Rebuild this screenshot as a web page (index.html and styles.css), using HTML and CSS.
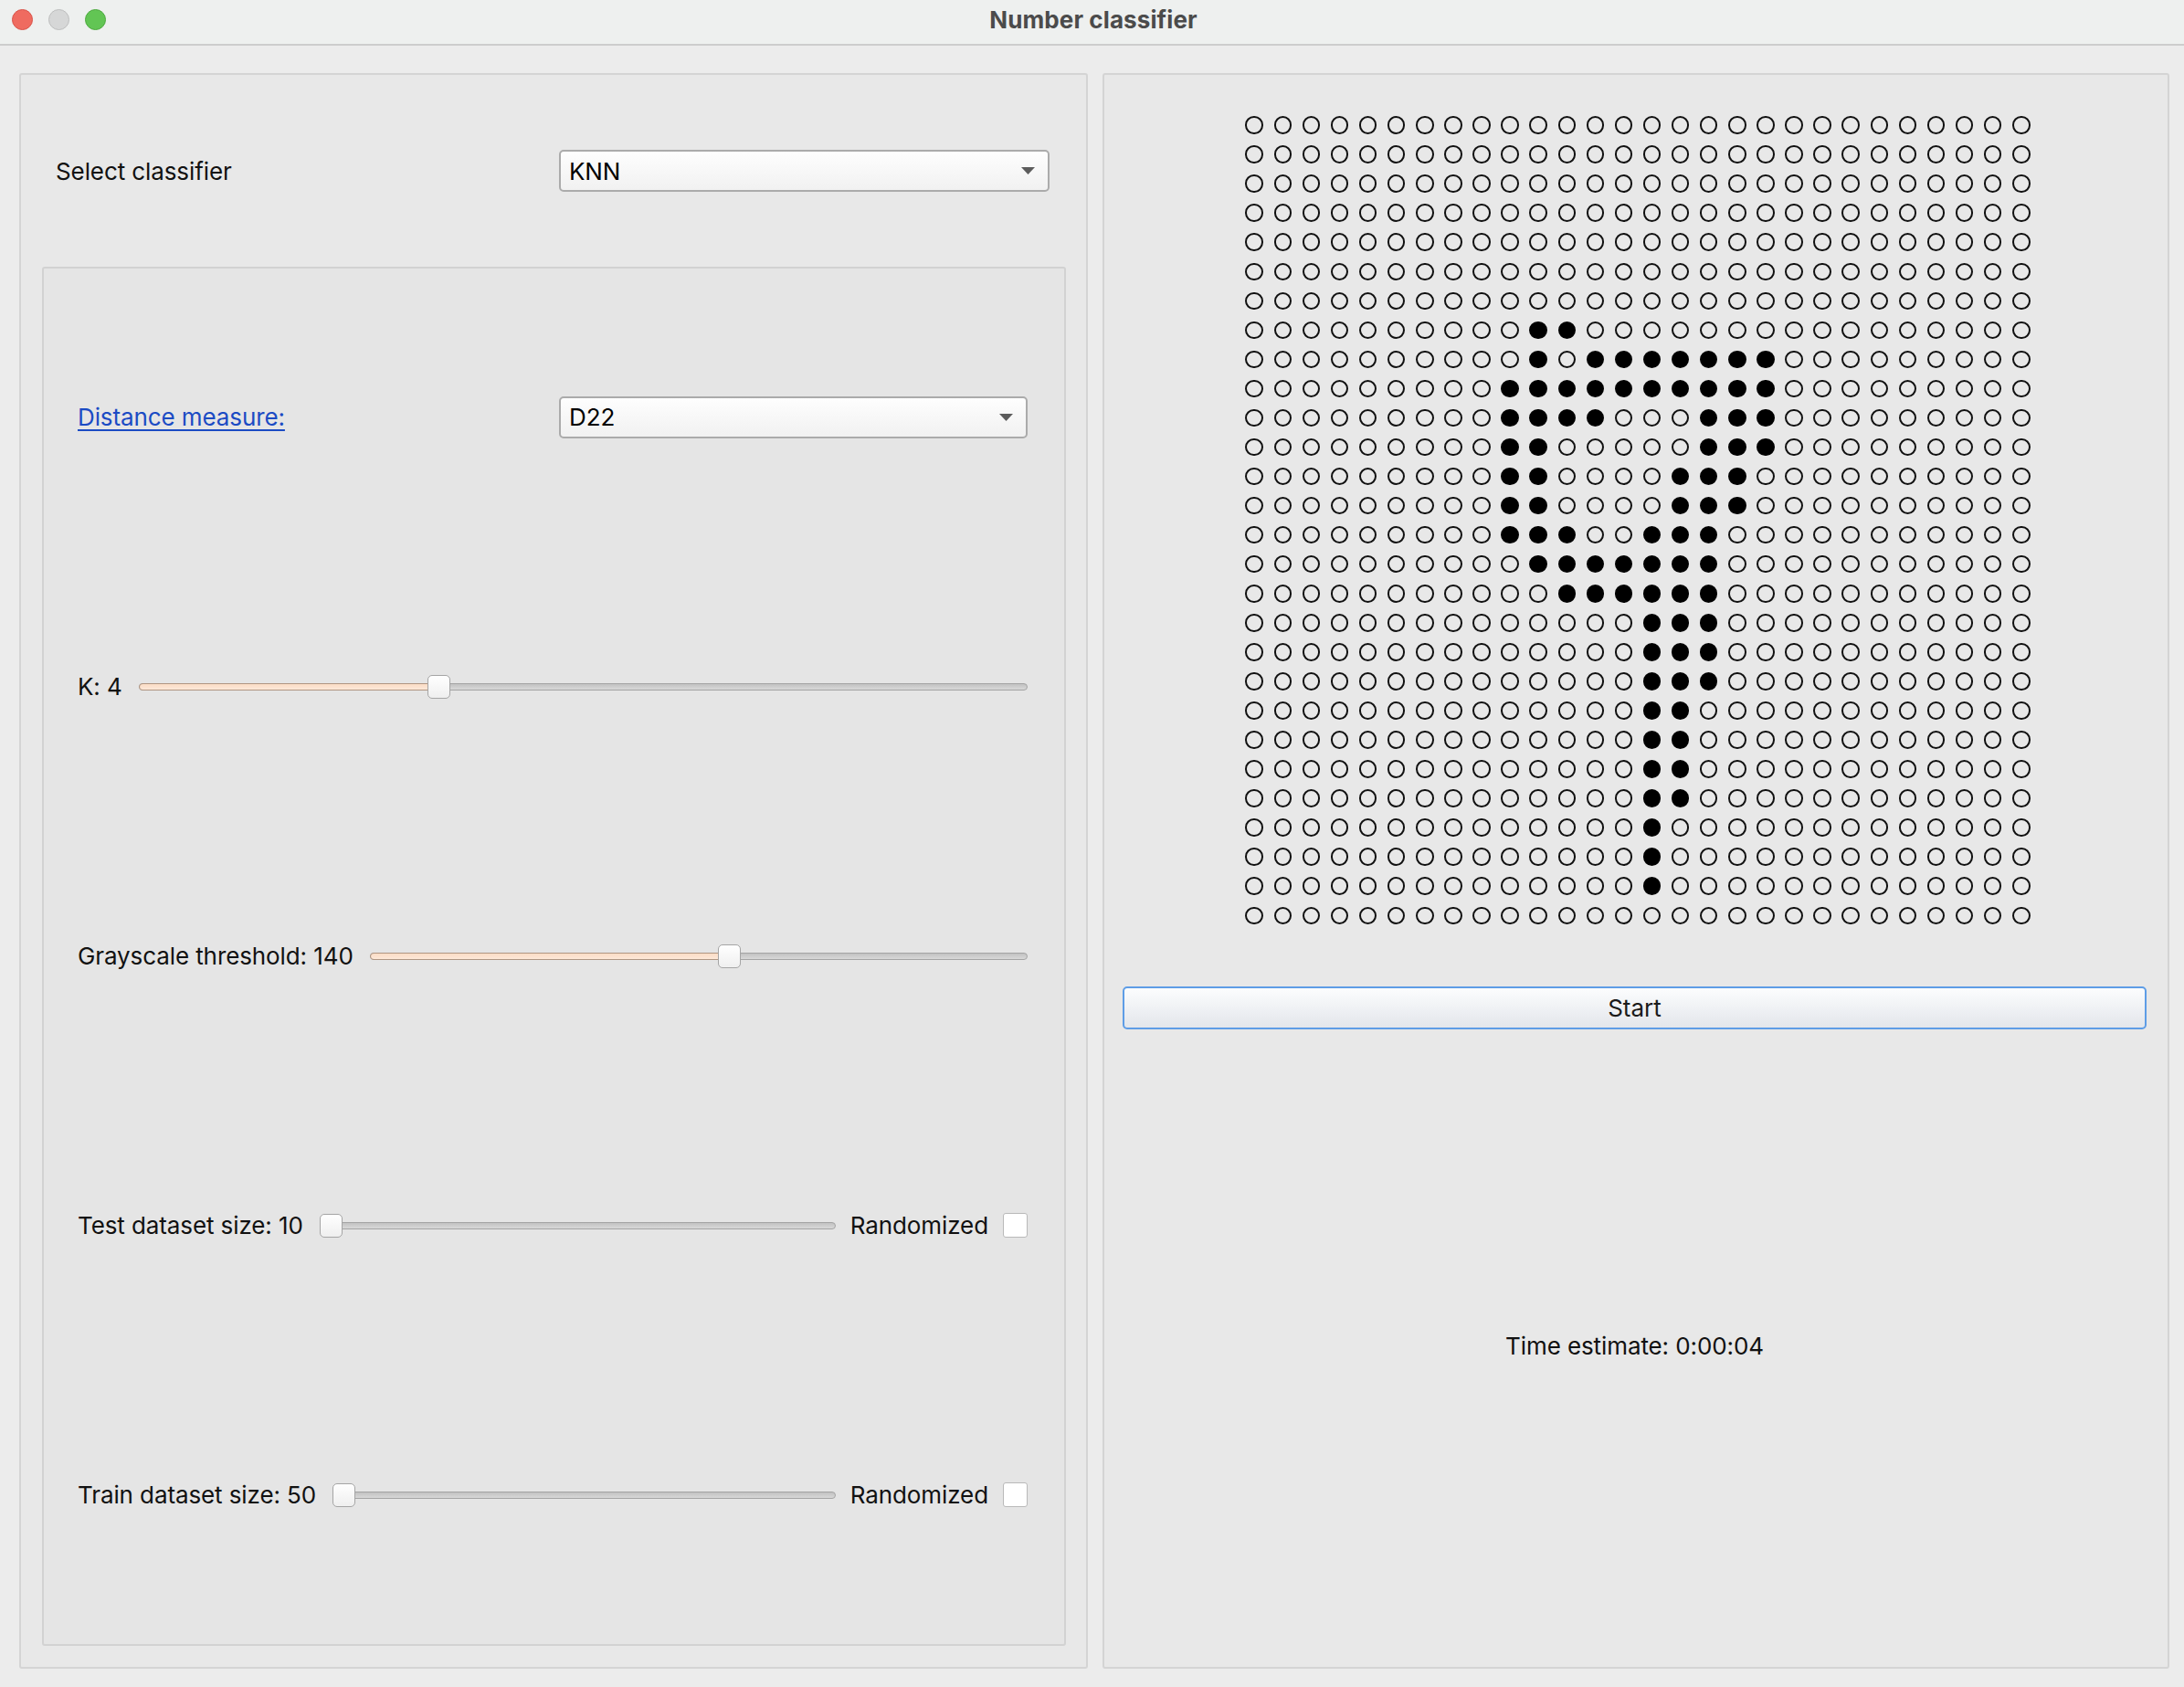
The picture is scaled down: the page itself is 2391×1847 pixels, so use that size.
FILE: index.html
```html
<!DOCTYPE html>
<html lang="en">
<head>
<meta charset="utf-8">
<title>Number classifier</title>
<link rel="stylesheet" href="styles.css">
</head>
<body>
<div class="window">
  <div class="titlebar">
    <div class="lights">
      <span class="light red"></span>
      <span class="light gray"></span>
      <span class="light green"></span>
    </div>
    <div class="title">Number classifier</div>
    <div></div>
  </div>
  <div class="content">
    <section class="panel left">
      <div class="header-row">
        <span class="label">Select classifier</span>
        <div class="combo combo-wide">
          <span>KNN</span>
          <svg class="arrow" width="15" height="8" viewBox="0 0 15 8"><path d="M0 0H15L7.5 8Z" fill="#5c5c5c"/></svg>
        </div>
      </div>
      <div class="group">
        <div class="row">
          <a class="link" href="#">Distance measure:</a>
          <div class="combo combo-narrow">
            <span>D22</span>
            <svg class="arrow" width="15" height="8" viewBox="0 0 15 8"><path d="M0 0H15L7.5 8Z" fill="#5c5c5c"/></svg>
          </div>
        </div>
        <div class="row">
          <span class="label">K: 4</span>
          <div class="slider" style="--v: 0.3333">
            <div class="groove"></div>
            <div class="fill"></div>
            <div class="handle"></div>
          </div>
        </div>
        <div class="row">
          <span class="label">Grayscale threshold: 140</span>
          <div class="slider" style="--v: 0.549">
            <div class="groove"></div>
            <div class="fill"></div>
            <div class="handle"></div>
          </div>
        </div>
        <div class="row">
          <span class="label">Test dataset size: 10</span>
          <div class="slider" style="--v: 0">
            <div class="groove"></div>
            <div class="handle"></div>
          </div>
          <span class="label check-label">Randomized</span>
          <span class="checkbox"></span>
        </div>
        <div class="row">
          <span class="label">Train dataset size: 50</span>
          <div class="slider" style="--v: 0">
            <div class="groove"></div>
            <div class="handle"></div>
          </div>
          <span class="label check-label">Randomized</span>
          <span class="checkbox"></span>
        </div>
      </div>
    </section>
    <section class="panel right">
      <div class="grid" id="grid"></div>
      <button class="start" type="button">Start</button>
      <div class="status">Time estimate: 0:00:04</div>
    </section>
  </div>
</div>
<script src="script.js"></script>
</body>
</html>
```

FILE: styles.css
```css
* { box-sizing: border-box; }
html, body { margin: 0; padding: 0; }
body {
  width: 2391px;
  height: 1847px;
  overflow: hidden;
  background: #ececec;
  font-family: Inter, "Noto Sans", "Liberation Sans", sans-serif;
  font-size: 26px;
  letter-spacing: -0.1px;
  color: #111;
}
.window { display: flex; flex-direction: column; height: 1847px; }

.titlebar {
  flex: none;
  height: 50px;
  padding-bottom: 6px;
  background: #eef0ef;
  border-bottom: 2px solid #cdcdcd;
  display: grid;
  grid-template-columns: 1fr auto 1fr;
  align-items: center;
}
.lights { display: flex; gap: 17px; padding-left: 13px; }
.light { width: 23px; height: 23px; border-radius: 50%; }
.red { background: #ef6b60; border: 1px solid #d9554b; }
.gray { background: #d6d7d7; border: 1px solid #bdbebe; }
.green { background: #62c554; border: 1px solid #4eaa40; }
.title { font-weight: 700; color: #4b4b4b; font-size: 26px; letter-spacing: 0.1px; padding-left: 3px; }

.content {
  flex: 1;
  display: flex;
  gap: 16px;
  padding: 30px 16px 20px 21px;
}
.panel {
  flex: 1;
  display: flex;
  flex-direction: column;
  background: #e8e8e8;
  border: 2px solid #d4d4d4;
  border-radius: 3px;
}
.left { padding: 0 22px 23px 23px; }
.header-row {
  flex: none;
  height: 210px;
  display: flex;
  align-items: center;
  padding: 0 18px 0 15px;
}
.label { white-space: nowrap; }

.combo {
  margin-left: auto;
  height: 46px;
  display: flex;
  align-items: center;
  justify-content: space-between;
  padding: 0 14px 0 9px;
  background: linear-gradient(#fefefe, #f1f1f1);
  border: 2px solid #ababab;
  border-radius: 5px;
  color: #000;
}
.combo-wide { width: 537px; }
.combo-narrow { width: 513px; }
.arrow { display: block; }

.group {
  flex: 1;
  display: flex;
  flex-direction: column;
  padding: 15px 40px 16px 37px;
  background: #e5e5e5;
  border: 2px solid #d2d2d2;
  border-radius: 3px;
}
.row { flex: 1; display: flex; align-items: center; }
.link { color: #1b4bc4; text-decoration: underline; text-underline-offset: 4px; text-decoration-thickness: 1.5px; }

.slider {
  flex: 1;
  position: relative;
  height: 26px;
  margin-left: 18px;
}
.groove {
  position: absolute;
  left: 0;
  right: 0;
  top: 9px;
  height: 8px;
  border: 1px solid #a4a4a4;
  border-radius: 4px;
  background: linear-gradient(#c2c2c2, #d8d8d8);
}
.fill {
  position: absolute;
  left: 0;
  top: 9px;
  height: 8px;
  width: calc(var(--v) * (100% - 25px) + 12px);
  border: 1px solid #b09682;
  border-radius: 4px 0 0 4px;
  background: linear-gradient(#fadcc5, #fde8d8);
}
.handle {
  position: absolute;
  top: 0;
  left: calc(var(--v) * (100% - 25px));
  width: 25px;
  height: 26px;
  border: 1.5px solid #a5a5a5;
  border-radius: 5px;
  background: linear-gradient(#ffffff, #efefef);
}
.check-label { margin-left: 16px; }
.checkbox {
  flex: none;
  margin-left: 16px;
  width: 27px;
  height: 27px;
  background: #fff;
  border: 1.5px solid #b9b9b9;
  border-radius: 3px;
}

.right { padding: 39px 23px 6px 20px; }
.grid {
  align-self: center;
  margin-left: 7px;
  display: grid;
  grid-template-columns: repeat(28, 31.1px);
  grid-auto-rows: 32.05px;
}
.dot {
  place-self: center;
  width: 19.5px;
  height: 19.5px;
  border: 2.5px solid #111;
  border-radius: 50%;
}
.dot.on { background: #000; border-color: #000; }
.start {
  flex: none;
  margin-top: 62px;
  height: 47px;
  font: inherit;
  color: #1a1a1a;
  background: linear-gradient(#fcfdfe, #e3e6eb);
  border: 2px solid #5e9de6;
  border-radius: 5px;
}
.status {
  flex: 1;
  display: flex;
  align-items: center;
  justify-content: center;
  color: #111;
}
```

FILE: script.js
```js
var rows = [
  "............................",
  "............................",
  "............................",
  "............................",
  "............................",
  "............................",
  "............................",
  "..........##................",
  "..........#.#######.........",
  ".........##########.........",
  ".........####...###.........",
  ".........##.....###.........",
  ".........##....###..........",
  ".........##....###..........",
  ".........###..###...........",
  "..........#######...........",
  "...........######...........",
  "..............###...........",
  "..............###...........",
  "..............###...........",
  "..............##............",
  "..............##............",
  "..............##............",
  "..............##............",
  "..............#.............",
  "..............#.............",
  "..............#.............",
  "............................"
];
var grid = document.getElementById("grid");
rows.forEach(function (row) {
  for (var i = 0; i < row.length; i++) {
    var d = document.createElement("span");
    d.className = row[i] === "#" ? "dot on" : "dot";
    grid.appendChild(d);
  }
});
```
